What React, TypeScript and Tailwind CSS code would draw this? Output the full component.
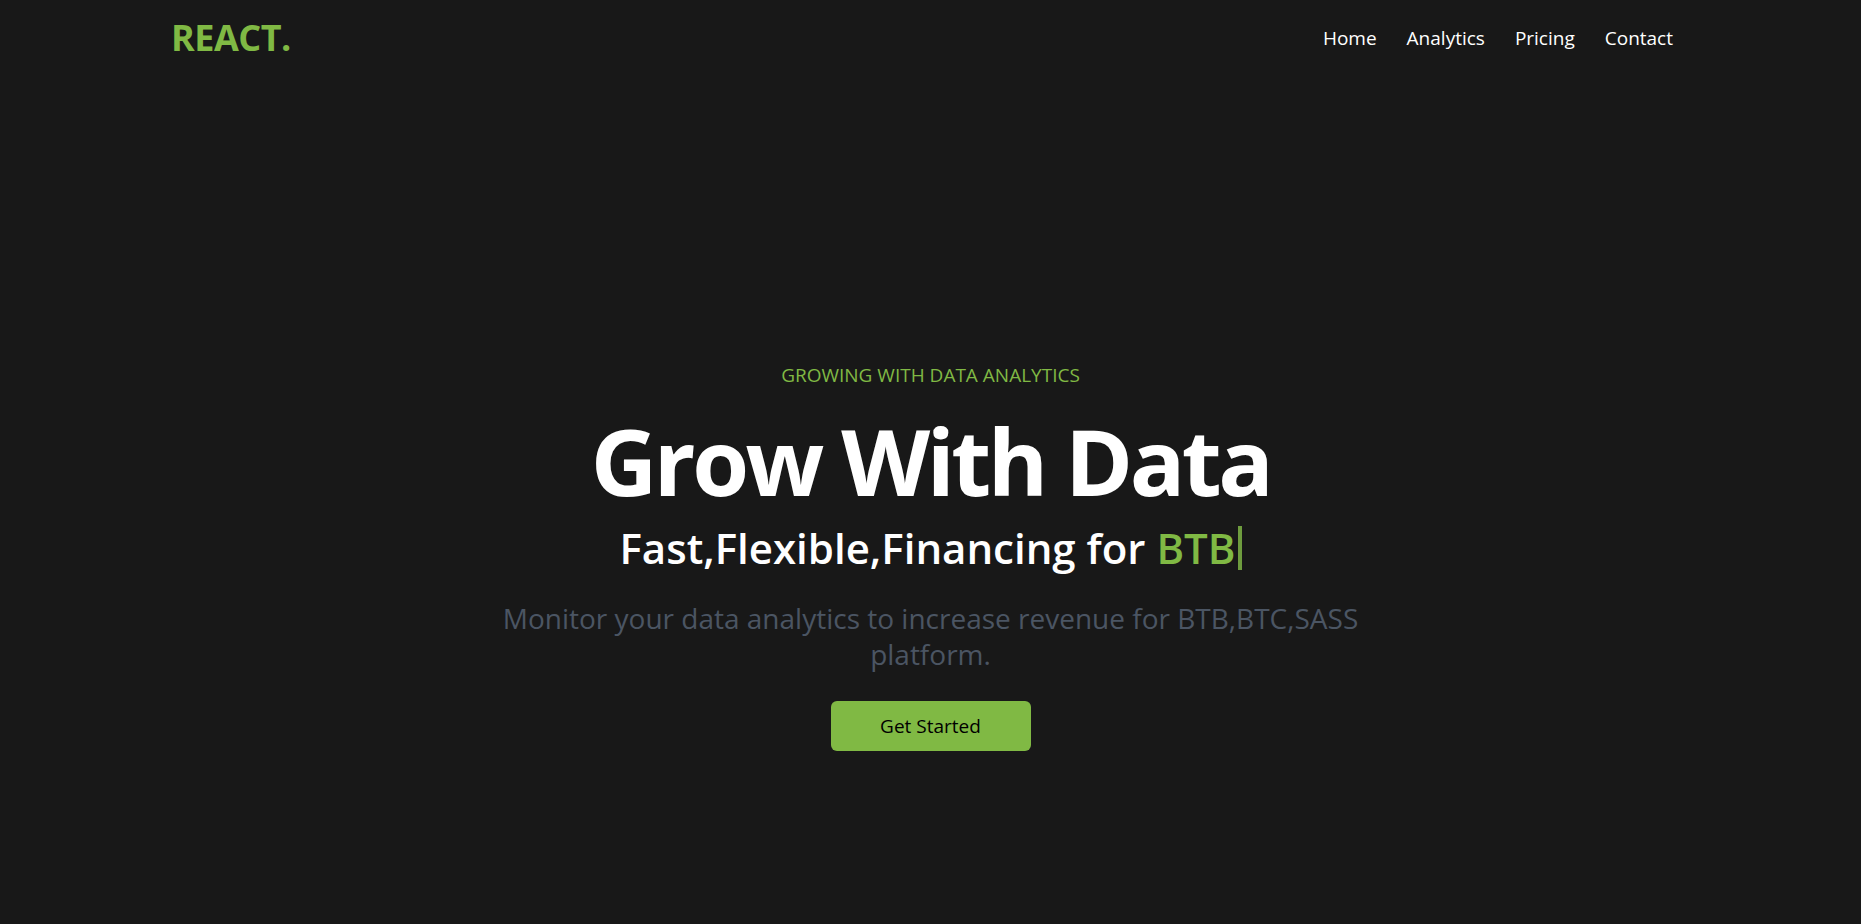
import React from "react";

export default function App() {
  const font = { fontFamily: '"Open Sans", "Noto Sans", Arial, sans-serif' };
  return (
    <div className="min-h-screen w-full bg-[#181818] text-white" style={font}>
      <header className="flex h-[76px] w-full items-center justify-between pl-[171px] pr-[173px]">
        <h1 className="text-[36px] font-bold leading-10 tracking-[-0.5px] text-[#80b944]">REACT.</h1>
        <ul className="flex text-[19px] text-white">
          <li className="px-[15px]">Home</li>
          <li className="px-[15px]">Analytics</li>
          <li className="px-[15px]">Pricing</li>
          <li className="px-[15px]">Contact</li>
        </ul>
      </header>
      <section className="flex w-full flex-col items-center pt-[285px] text-center">
        <p className="text-[19px] leading-7 text-[#80b944]">GROWING WITH DATA ANALYTICS</p>
        <h1 className="mt-[17px] text-[92px] font-bold leading-[110px] tracking-[-3.5px]">Grow With Data</h1>
        <div className="mt-[6px] flex items-center text-[42px] font-semibold leading-[52px]">
          <span>
            Fast,Flexible,Financing for <span className="text-[#80b944]">BTB</span>
          </span>
          <span className="ml-[2px] inline-block h-[44px] w-[4px] bg-[#6e9c3e]" />
        </div>
        <p className="mt-[26px] max-w-[880px] text-[28px] leading-9 text-[#4b5563]">
          Monitor your data analytics to increase revenue for BTB,BTC,SASS platform.
        </p>
        <button className="mt-[29px] flex h-[50px] w-[200px] items-center justify-center rounded-md bg-[#80b944] text-[19px] font-medium text-black">
          Get Started
        </button>
      </section>
    </div>
  );
}
